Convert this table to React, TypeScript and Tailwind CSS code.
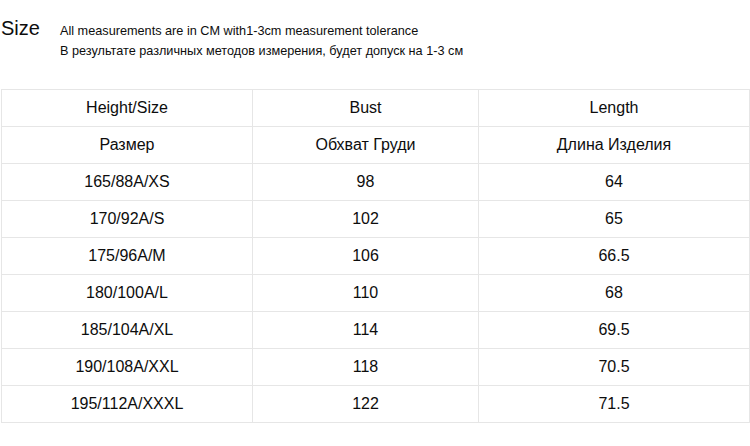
import React from "react";

const rows = [
  ["Height/Size", "Bust", "Length"],
  ["Размер", "Обхват Груди", "Длина Изделия"],
  ["165/88A/XS", "98", "64"],
  ["170/92A/S", "102", "65"],
  ["175/96A/M", "106", "66.5"],
  ["180/100A/L", "110", "68"],
  ["185/104A/XL", "114", "69.5"],
  ["190/108A/XXL", "118", "70.5"],
  ["195/112A/XXXL", "122", "71.5"],
];

const SizeChart: React.FC = () => {
  return (
    <div className="w-[750px] h-[446px] bg-white text-[#0d0d0d] font-['Liberation_Sans',Arial,sans-serif]">
      {/* Header */}
      <div className="flex items-baseline pt-[16px] pl-[1px] h-[89px]">
        <h1 className="text-[20px] leading-[24px] w-[59px]">Size</h1>
        <div className="text-[12.7px] leading-[19.5px]">
          <p>All measurements are in CM with1-3cm measurement tolerance</p>
          <p>В результате различных методов измерения, будет допуск на 1-3 см</p>
        </div>
      </div>

      {/* Table */}
      <table className="ml-[1px] w-[748px] border-collapse table-fixed">
        <colgroup>
          <col className="w-[251px]" />
          <col className="w-[226px]" />
          <col className="w-[271px]" />
        </colgroup>
        <tbody>
          {rows.map((row, i) => (
            <tr key={i} className="h-[37px]">
              {row.map((cell, j) => (
                <td
                  key={j}
                  className="border border-[#e6e6e6] text-center text-[16px] leading-[20px] p-0"
                >
                  {cell}
                </td>
              ))}
            </tr>
          ))}
        </tbody>
      </table>
    </div>
  );
};

export default SizeChart;
